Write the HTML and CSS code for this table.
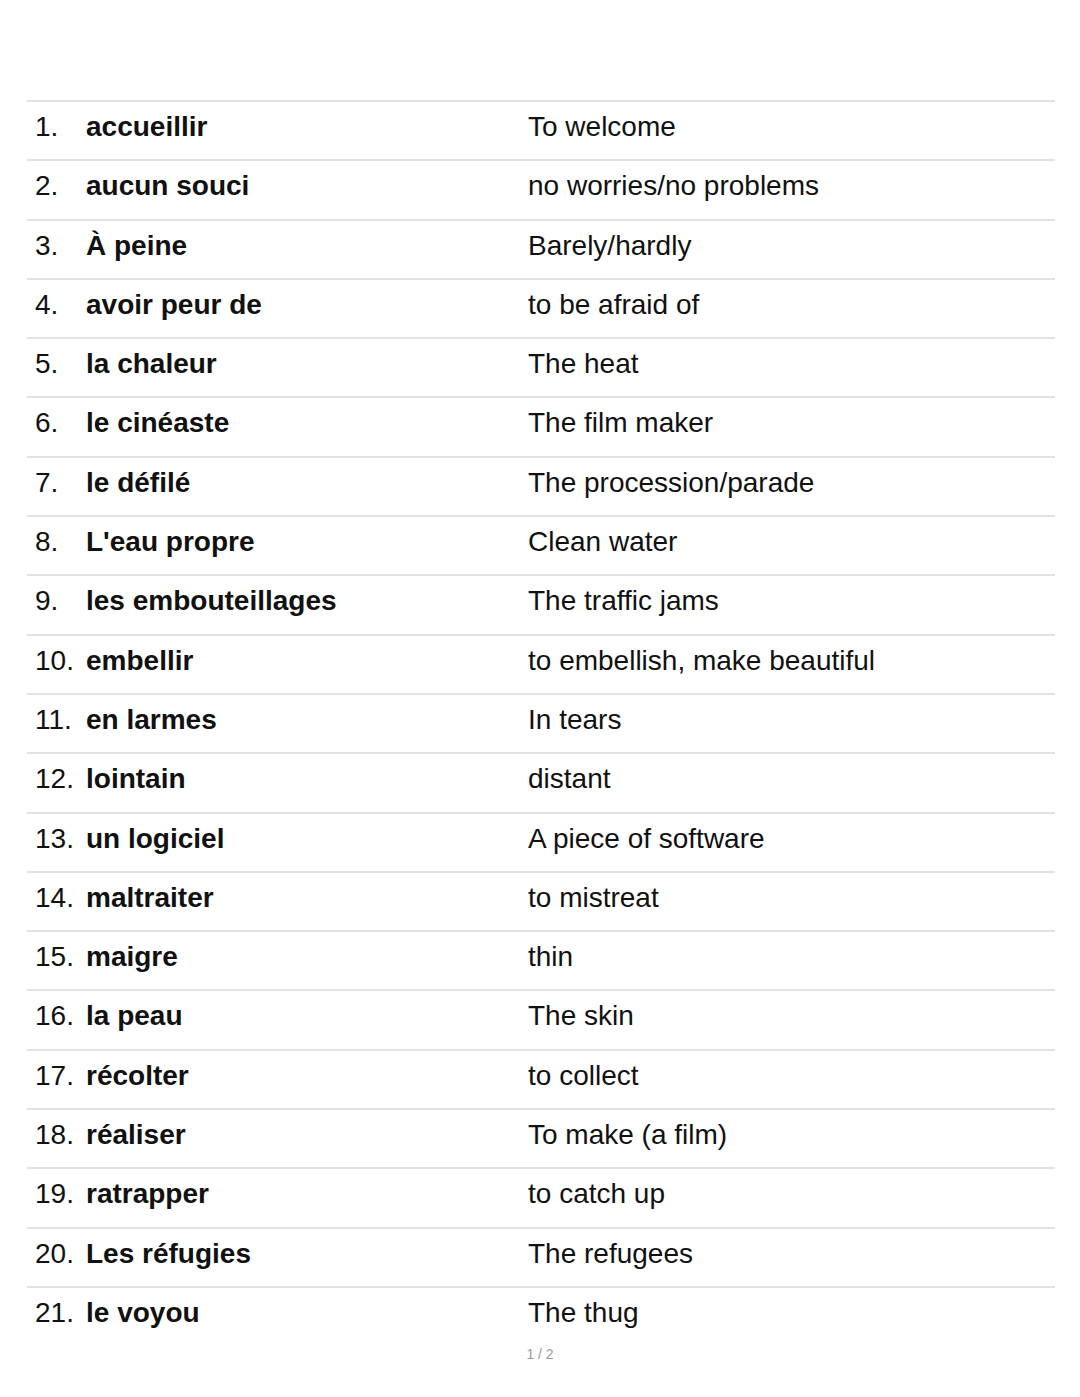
FILE: index.html
```html
<!DOCTYPE html>
<html lang="fr">
<head>
<meta charset="utf-8">
<title>Vocabulaire</title>
<link rel="stylesheet" href="styles.css">
</head>
<body>
<main class="page">
  <div class="list">
    <div class="row"><div class="fr"><span class="num">1.</span><span class="term">accueillir</span></div><div class="en">To welcome</div></div>
    <div class="row"><div class="fr"><span class="num">2.</span><span class="term">aucun souci</span></div><div class="en">no worries/no problems</div></div>
    <div class="row"><div class="fr"><span class="num">3.</span><span class="term">À peine</span></div><div class="en">Barely/hardly</div></div>
    <div class="row"><div class="fr"><span class="num">4.</span><span class="term">avoir peur de</span></div><div class="en">to be afraid of</div></div>
    <div class="row"><div class="fr"><span class="num">5.</span><span class="term">la chaleur</span></div><div class="en">The heat</div></div>
    <div class="row"><div class="fr"><span class="num">6.</span><span class="term">le cinéaste</span></div><div class="en">The film maker</div></div>
    <div class="row"><div class="fr"><span class="num">7.</span><span class="term">le défilé</span></div><div class="en">The procession/parade</div></div>
    <div class="row"><div class="fr"><span class="num">8.</span><span class="term">L'eau propre</span></div><div class="en">Clean water</div></div>
    <div class="row"><div class="fr"><span class="num">9.</span><span class="term">les embouteillages</span></div><div class="en">The traffic jams</div></div>
    <div class="row"><div class="fr"><span class="num">10.</span><span class="term">embellir</span></div><div class="en">to embellish, make beautiful</div></div>
    <div class="row"><div class="fr"><span class="num">11.</span><span class="term">en larmes</span></div><div class="en">In tears</div></div>
    <div class="row"><div class="fr"><span class="num">12.</span><span class="term">lointain</span></div><div class="en">distant</div></div>
    <div class="row"><div class="fr"><span class="num">13.</span><span class="term">un logiciel</span></div><div class="en">A piece of software</div></div>
    <div class="row"><div class="fr"><span class="num">14.</span><span class="term">maltraiter</span></div><div class="en">to mistreat</div></div>
    <div class="row"><div class="fr"><span class="num">15.</span><span class="term">maigre</span></div><div class="en">thin</div></div>
    <div class="row"><div class="fr"><span class="num">16.</span><span class="term">la peau</span></div><div class="en">The skin</div></div>
    <div class="row"><div class="fr"><span class="num">17.</span><span class="term">récolter</span></div><div class="en">to collect</div></div>
    <div class="row"><div class="fr"><span class="num">18.</span><span class="term">réaliser</span></div><div class="en">To make (a film)</div></div>
    <div class="row"><div class="fr"><span class="num">19.</span><span class="term">ratrapper</span></div><div class="en">to catch up</div></div>
    <div class="row"><div class="fr"><span class="num">20.</span><span class="term">Les réfugies</span></div><div class="en">The refugees</div></div>
    <div class="row"><div class="fr"><span class="num">21.</span><span class="term">le voyou</span></div><div class="en">The thug</div></div>
  </div>
  <div class="pager">1 / 2</div>
</main>
</body>
</html>
```

FILE: styles.css
```css
html, body {
  margin: 0;
  padding: 0;
  background: #ffffff;
}

body {
  font-family: "Liberation Sans", Arial, sans-serif;
  color: #111111;
}

.page {
  width: 1080px;
  padding-top: 100px;
  box-sizing: border-box;
}

.list {
  margin-left: 27px;
  width: 1028px;
}

.row {
  display: grid;
  grid-template-columns: 493px 1fr;
  height: 59.3px;
  box-sizing: border-box;
  border-top: 2px solid #e2e2e4;
  font-size: 28px;
  line-height: 32px;
}

.fr {
  display: flex;
  padding: 9px 0 0 8px;
}

.num {
  width: 51px;
  flex: none;
  font-weight: 400;
}

.term {
  font-weight: 700;
}

.en {
  padding: 9px 0 0 8px;
}

.pager {
  text-align: center;
  font-size: 14px;
  line-height: 16px;
  color: #9a9a9a;
  margin-top: 1px;
}
```
